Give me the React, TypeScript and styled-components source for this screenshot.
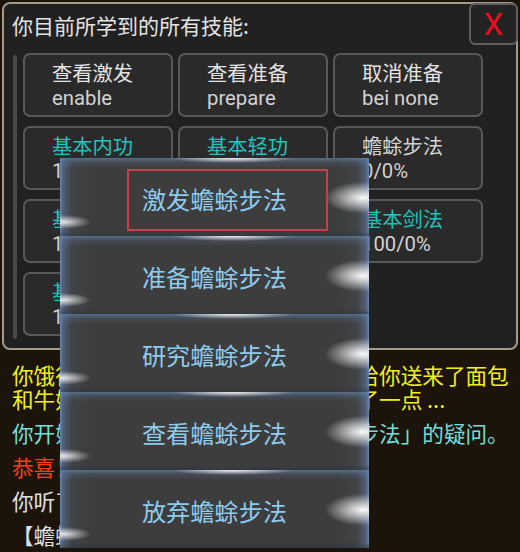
import React from "react";
import styled, { createGlobalStyle } from "styled-components";

const GlobalStyle = createGlobalStyle`
  html, body {
    margin: 0;
    padding: 0;
    background: #1c140b;
  }
  body {
    width: 520px;
    height: 552px;
    overflow: hidden;
    font-family: Roboto, "Noto Sans CJK SC", sans-serif;
  }
  * { box-sizing: border-box; }
`;

const Screen = styled.div`
  position: relative;
  width: 520px;
  height: 552px;
  overflow: hidden;
  background: #1c140b;
`;

const Dialog = styled.section`
  margin: 2px 2px 0;
  height: 348px;
  border: 2px solid #a39c86;
  border-radius: 8px;
  background: #212121;
  display: flex;
  flex-direction: column;
`;

const Header = styled.header`
  height: 49px;
  display: flex;
  justify-content: space-between;
  align-items: flex-start;
  padding-left: 8px;
`;

const Title = styled.h1`
  margin: 8px 0 0;
  font-family: "Noto Sans CJK SC", sans-serif;
  font-weight: 400;
  font-size: 21px;
  line-height: 26px;
  color: #e4e4e4;
`;

const CloseButton = styled.button`
  width: 49px;
  height: 42px;
  margin: -1px -2px 0 0;
  padding: 0;
  border: 2px solid #5e5e5e;
  border-radius: 6px;
  background: #232323;
  color: #ea0f1c;
  font-family: Roboto, "Liberation Sans", sans-serif;
  font-size: 31px;
  line-height: 1;
  display: flex;
  align-items: center;
  justify-content: center;
`;

const Body = styled.div`
  display: flex;
  gap: 6px;
  padding-left: 9px;
`;

const ScrollTrack = styled.div`
  width: 4px;
  height: 284px;
  margin-top: 2px;
  border-radius: 2px;
  background: #4a4a4a;
`;

const SkillGrid = styled.div`
  display: grid;
  grid-template-columns: repeat(3, 150px);
  grid-auto-rows: 64px;
  gap: 9px 5px;
`;

type Tone = "plain" | "basic" | "skill";

const toneColor: Record<Tone, string> = {
  plain: "#e4e4e4",
  basic: "#20c4be",
  skill: "#d2d2d2",
};

const SkillButton = styled.div`
  border: 2px solid #595959;
  border-radius: 7px;
  background: #2a2a2a;
  padding: 1px 0 0 27px;
  display: flex;
  flex-direction: column;
  justify-content: center;
  font-size: 20.3px;
  line-height: 24px;
`;

const SkillName = styled.span<{ $tone: Tone }>`
  color: ${(p) => toneColor[p.$tone]};
  white-space: nowrap;
`;

const SkillSub = styled.span`
  color: #d2d2d2;
  white-space: nowrap;
`;

const Log = styled.div`
  padding: 13px 6px 0 12px;
  font-family: "Noto Sans CJK SC", sans-serif;
  font-size: 21.6px;
  line-height: 24px;
`;

type LogTone = "yellow" | "cyan" | "red" | "white";
const logColor: Record<LogTone, string> = {
  yellow: "#f2f01c",
  cyan: "#74dfd6",
  red: "#ff3c12",
  white: "#e0e0e0",
};

const LogLine = styled.p<{ $tone: LogTone }>`
  margin: 0 0 10px;
  color: ${(p) => logColor[p.$tone]};
`;

const Menu = styled.div`
  position: absolute;
  left: 60px;
  top: 158px;
  width: 309px;
  display: flex;
  flex-direction: column;
`;

const MenuItem = styled.div`
  position: relative;
  height: 78px;
  padding-top: 4px;
  display: flex;
  align-items: center;
  justify-content: center;
  font-family: "Noto Sans CJK SC", sans-serif;
  font-size: 24.2px;
  line-height: 30px;
  color: #8ecbee;
  background:
    radial-gradient(ellipse 38px 16px at 98% 51%, rgba(255, 255, 255, 0.97) 0%, rgba(255, 255, 255, 0.55) 45%, rgba(255, 255, 255, 0) 100%),
    radial-gradient(ellipse 62px 5px at 56% 0%, rgba(255, 255, 255, 0.9) 0%, rgba(255, 255, 255, 0) 100%),
    radial-gradient(ellipse 28px 7px at 1% 82%, rgba(255, 255, 255, 0.85) 0%, rgba(255, 255, 255, 0) 100%),
    linear-gradient(to bottom, rgba(100, 135, 180, 0.65) 0, rgba(100, 135, 180, 0.22) 4px, rgba(100, 135, 180, 0) 10px, rgba(0, 0, 0, 0) calc(100% - 6px), rgba(40, 50, 64, 0.45) 100%),
    linear-gradient(to right, #6a86a8 0, #50607a 3px, #414447 12px, #3d3d3d 30px, #3d3d3d calc(100% - 30px), #414447 calc(100% - 12px), #50607a calc(100% - 3px), #6a86a8 100%);
`;

const FocusRing = styled.span`
  position: absolute;
  z-index: 1;
  display: block;
  left: 67px;
  top: 11px;
  width: 201px;
  height: 62px;
  border: 2px solid #c8404c;
`;

const MenuLabel = styled.span`
  position: relative;
  z-index: 2;
`;

type Skill = { name: string; sub: string; tone: Tone };

const skills: Skill[] = [
  { name: "查看激发", sub: "enable", tone: "plain" },
  { name: "查看准备", sub: "prepare", tone: "plain" },
  { name: "取消准备", sub: "bei none", tone: "plain" },
  { name: "基本内功", sub: "100/0%", tone: "basic" },
  { name: "基本轻功", sub: "100/0%", tone: "basic" },
  { name: "蟾蜍步法", sub: "0/0%", tone: "skill" },
  { name: "基本拳脚", sub: "100/0%", tone: "basic" },
  { name: "基本招架", sub: "100/0%", tone: "basic" },
  { name: "基本剑法", sub: "100/0%", tone: "basic" },
  { name: "基本刀法", sub: "100/0%", tone: "basic" },
  { name: "基本杖法", sub: "100/0%", tone: "basic" },
];

const logLines: { text: string; tone: LogTone }[] = [
  { text: "你饿得头昏眼花，直冒冷汗，店小二给你送来了面包和牛奶，你狼吞虎咽地吃完，感觉好了一点 ...", tone: "yellow" },
  { text: "你开始认真地向师父请教关于「蟾蜍步法」的疑问。", tone: "cyan" },
  { text: "恭喜！你的蟾蜍步法进步了！", tone: "red" },
  { text: "你听了师父的指导，似有所悟。", tone: "white" },
  { text: "【蟾蜍步法】等级提升", tone: "white" },
];

const menuItems = ["激发蟾蜍步法", "准备蟾蜍步法", "研究蟾蜍步法", "查看蟾蜍步法", "放弃蟾蜍步法"];

export default function App() {
  return (
    <Screen>
      <GlobalStyle />
      <Dialog>
        <Header>
          <Title>你目前所学到的所有技能:</Title>
          <CloseButton>X</CloseButton>
        </Header>
        <Body>
          <ScrollTrack />
          <SkillGrid>
            {skills.map((s) => (
              <SkillButton key={s.name}>
                <SkillName $tone={s.tone}>{s.name}</SkillName>
                <SkillSub>{s.sub}</SkillSub>
              </SkillButton>
            ))}
          </SkillGrid>
        </Body>
      </Dialog>
      <Log>
        {logLines.map((l) => (
          <LogLine key={l.text} $tone={l.tone}>
            {l.text}
          </LogLine>
        ))}
      </Log>
      <Menu>
        {menuItems.map((m, i) => (
          <MenuItem key={m}>
            {i === 0 && <FocusRing />}
            <MenuLabel>{m}</MenuLabel>
          </MenuItem>
        ))}
      </Menu>
    </Screen>
  );
}
